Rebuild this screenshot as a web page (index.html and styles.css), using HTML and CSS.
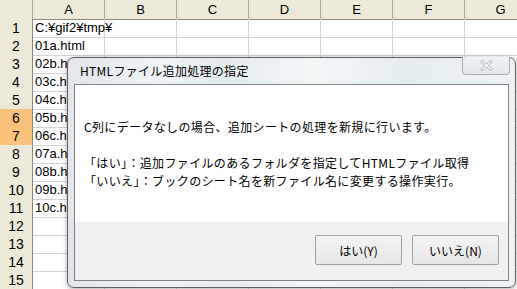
FILE: index.html
```html
<!DOCTYPE html>
<html lang="ja">
<head>
  <meta charset="UTF-8">
  <title>HTMLファイル追加処理の指定</title>
  <link rel="stylesheet" href="styles.css">
</head>
<body>
  <div class="sheet">
    <div class="row head">
      <div class="corner"></div><div>A</div><div>B</div><div>C</div><div>D</div><div>E</div><div>F</div><div>G</div>
    </div>
    <div class="row">
      <div class="num">1</div><div>C:¥gif2¥tmp¥</div><div></div><div></div><div></div><div></div><div></div><div></div>
    </div>
    <div class="row">
      <div class="num">2</div><div>01a.html</div><div></div><div></div><div></div><div></div><div></div><div></div>
    </div>
    <div class="row">
      <div class="num">3</div><div>02b.html</div><div></div><div></div><div></div><div></div><div></div><div></div>
    </div>
    <div class="row">
      <div class="num">4</div><div>03c.html</div><div></div><div></div><div></div><div></div><div></div><div></div>
    </div>
    <div class="row">
      <div class="num">5</div><div>04c.html</div><div></div><div></div><div></div><div></div><div></div><div></div>
    </div>
    <div class="row">
      <div class="num sel">6</div><div>05b.html</div><div></div><div></div><div></div><div></div><div></div><div></div>
    </div>
    <div class="row">
      <div class="num sel">7</div><div>06c.html</div><div></div><div></div><div></div><div></div><div></div><div></div>
    </div>
    <div class="row">
      <div class="num">8</div><div>07a.html</div><div></div><div></div><div></div><div></div><div></div><div></div>
    </div>
    <div class="row">
      <div class="num">9</div><div>08b.html</div><div></div><div></div><div></div><div></div><div></div><div></div>
    </div>
    <div class="row">
      <div class="num">10</div><div>09b.html</div><div></div><div></div><div></div><div></div><div></div><div></div>
    </div>
    <div class="row">
      <div class="num">11</div><div>10c.html</div><div></div><div></div><div></div><div></div><div></div><div></div>
    </div>
    <div class="row">
      <div class="num">12</div><div></div><div></div><div></div><div></div><div></div><div></div><div></div>
    </div>
    <div class="row">
      <div class="num">13</div><div></div><div></div><div></div><div></div><div></div><div></div><div></div>
    </div>
    <div class="row">
      <div class="num">14</div><div></div><div></div><div></div><div></div><div></div><div></div><div></div>
    </div>
    <div class="row">
      <div class="num">15</div><div></div><div></div><div></div><div></div><div></div><div></div><div></div>
    </div>

    <div class="dialog">
      <div class="title-bar">HTMLファイル追加処理の指定</div>
      <div class="close">
        <svg width="13" height="11" viewBox="0 0 13 11">
          <path d="M2 1.5 L11 9.5 M11 1.5 L2 9.5" stroke="#b9bec4" stroke-width="3.2" stroke-linecap="round" fill="none"/>
          <path d="M2 1.5 L11 9.5 M11 1.5 L2 9.5" stroke="#f4f6f8" stroke-width="1.3" stroke-linecap="round" fill="none"/>
        </svg>
      </div>
      <div class="client">
        <div class="msg">
          <p>C列にデータなしの場合、追加シートの処理を新規に行います。</p>
          <p>「はい」：追加ファイルのあるフォルダを指定してHTMLファイル取得<br>「いいえ」：ブックのシート名を新ファイル名に変更する操作実行。</p>
        </div>
        <div class="foot">
          <button class="btn">はい(Y)</button>
          <button class="btn">いいえ(N)</button>
        </div>
      </div>
    </div>
  </div>
</body>
</html>
```

FILE: styles.css
```css
body {
  margin: 0;
  background: #fff;
  font-family: "Liberation Sans", "Noto Sans CJK JP", sans-serif;
  color: #000;
}
.sheet {
  position: relative;
  width: 517px;
  height: 289px;
  overflow: hidden;
  background: #fff;
}
.row {
  display: grid;
  grid-template-columns: 33px repeat(7, 72px);
  height: 18px;
}
.row > div {
  box-sizing: border-box;
  border-right: 1px solid #d4d4d4;
  border-bottom: 1px solid #d4d4d4;
  padding-left: 2px;
  font-size: 13px;
  line-height: 18px;
  white-space: nowrap;
}
.row.head {
  height: 19px;
}
.row.head > div {
  background: #ece9d8;
  border-right-color: #aca899;
  border-bottom-color: #8c8a80;
  text-align: center;
  line-height: 19px;
  padding-left: 0;
}
.row > .num {
  background: #ece9d8;
  border-right-color: #8c8a80;
  border-bottom-color: #c8c5b6;
  text-align: center;
  padding-left: 0;
  font-size: 14px;
}
.row > .num.sel {
  background: #f8c27a;
  border-bottom-color: #d9a25a;
}

/* message box */
.dialog {
  position: absolute;
  left: 67px;
  top: 57px;
  width: 449px;
  height: 231px;
  box-sizing: border-box;
  border: 1px solid #5c5f63;
  border-radius: 7px;
  padding: 0 6px 6px;
  display: flex;
  flex-direction: column;
  background: linear-gradient(90deg, #e2e6e9 0%, #f1f4f6 20%, #e4ecef 35%, #f3f6f7 55%, #e6eef1 75%, #eef2f4 100%);
  box-shadow: 0 1px 5px rgba(0, 0, 0, 0.35);
  font-family: "Noto Sans CJK JP", "Liberation Sans", sans-serif;
}
.title-bar {
  height: 26px;
  line-height: 26px;
  padding-left: 6px;
  font-size: 12px;
  letter-spacing: 0.3px;
}
.close {
  position: absolute;
  right: 5px;
  top: -1px;
  width: 48px;
  height: 18px;
  box-sizing: border-box;
  border: 1px solid #a5acb4;
  border-top: none;
  border-radius: 0 0 4px 4px;
  background: linear-gradient(#eef1f3, #e3e8eb);
  display: flex;
  justify-content: center;
  align-items: center;
}
.client {
  flex: 1;
  border: 1px solid #7d8084;
  background: #fff;
  display: flex;
  flex-direction: column;
}
.msg {
  flex: 1;
  padding: 33px 0 0 9px;
  font-size: 12px;
  line-height: 18px;
  letter-spacing: 0.35px;
}
.msg p {
  margin: 0 0 18px;
}
.foot {
  height: 58px;
  box-sizing: border-box;
  background: #f0f0f0;
  display: flex;
  justify-content: flex-end;
  gap: 10px;
  padding: 13px 9px 0 0;
}
.btn {
  width: 87px;
  height: 30px;
  border: 1px solid #a0a0a0;
  border-radius: 2px;
  background: linear-gradient(#f3f3f3, #e6e6e6);
  font-family: "Noto Sans CJK JP", "Liberation Sans", sans-serif;
  font-size: 12px;
  color: #000;
  padding: 0;
}
```
